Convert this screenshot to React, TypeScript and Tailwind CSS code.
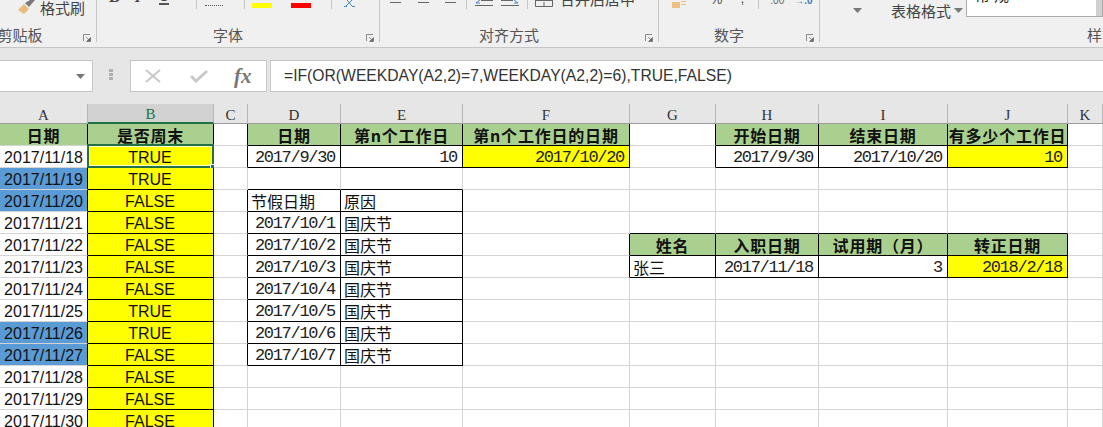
import React from "react";

const cols = ["A", "B", "C", "D", "E", "F", "G", "H", "I", "J", "K"];

type Cell = { t?: string; c?: "head" | "yellow" | "blue"; a?: "l" | "r" | "c"; f?: "arial" | "mono" | "cjk" };

const head = (t: string): Cell => ({ t, c: "head", a: "c", f: "cjk" });
const date = (t: string): Cell => ({ t, a: "r", f: "mono" });
const note = (t: string): Cell => ({ t, a: "l", f: "cjk" });

const weekdays: [string, string, boolean][] = [
  ["2017/11/18", "TRUE", false],
  ["2017/11/19", "TRUE", true],
  ["2017/11/20", "FALSE", true],
  ["2017/11/21", "FALSE", false],
  ["2017/11/22", "FALSE", false],
  ["2017/11/23", "FALSE", false],
  ["2017/11/24", "FALSE", false],
  ["2017/11/25", "TRUE", false],
  ["2017/11/26", "TRUE", true],
  ["2017/11/27", "FALSE", true],
  ["2017/11/28", "FALSE", false],
  ["2017/11/29", "FALSE", false],
  ["2017/11/30", "FALSE", false],
];

// sheet data, keyed by address
const data: Record<string, Cell> = {
  A1: head("日期"),
  B1: head("是否周末"),
  D1: head("日期"),
  E1: head("第n个工作日"),
  F1: head("第n个工作日的日期"),
  D2: date("2017/9/30"),
  E2: date("10"),
  F2: { t: "2017/10/20", c: "yellow", a: "r", f: "mono" },
  H1: head("开始日期"),
  I1: head("结束日期"),
  J1: head("有多少个工作日"),
  H2: date("2017/9/30"),
  I2: date("2017/10/20"),
  J2: { t: "10", c: "yellow", a: "r", f: "mono" },
  D4: note("节假日期"),
  E4: note("原因"),
  G6: head("姓名"),
  H6: head("入职日期"),
  I6: head("试用期（月）"),
  J6: head("转正日期"),
  G7: note("张三"),
  H7: date("2017/11/18"),
  I7: date("3"),
  J7: { t: "2018/2/18", c: "yellow", a: "r", f: "mono" },
};

weekdays.forEach(([d, v, blue], i) => {
  data[`A${i + 2}`] = { t: d, a: "r", f: "arial", c: blue ? "blue" : undefined };
  data[`B${i + 2}`] = { t: v, a: "c", f: "arial", c: "yellow" };
});

["10/1", "10/2", "10/3", "10/4", "10/5", "10/6", "10/7"].forEach((d, i) => {
  data[`D${i + 5}`] = date(`2017/${d}`);
  data[`E${i + 5}`] = note("国庆节");
});

const boxed = (col: number, row: number) => {
  const c = cols[col];
  if (c === "B") return true;
  if (["D", "E", "F", "H", "I", "J"].includes(c) && row <= 2) return true;
  if ((c === "D" || c === "E") && row >= 4 && row <= 11) return true;
  if (["G", "H", "I", "J"].includes(c) && (row === 6 || row === 7)) return true;
  return false;
};

const SheetCell = ({ col, row }: { col: number; row: number }) => {
  const cell = data[`${cols[col]}${row}`] ?? {};
  const right = boxed(col, row) || boxed(col + 1, row);
  const bottom = (boxed(col, row) || boxed(col, row + 1)) && cols[col] !== "A";
  return (
    <div
      className={`relative flex items-center overflow-visible whitespace-nowrap border-r border-b ${
        cell.f === "arial" ? "pl-[3px] pr-[4px]" : cell.f === "mono" ? "pl-[3px] pr-[5px]" : "px-[3px]"
      } ${right ? "border-r-black" : "border-r-[#d4d4d4]"} ${bottom ? "border-b-black" : "border-b-[#d4d4d4]"} ${
        cell.c === "head" ? "bg-[#a9d08e]" : cell.c === "yellow" ? "bg-[#ffff00]" : cell.c === "blue" ? "bg-[#5b9bd5]" : "bg-white"
      } ${cell.a === "r" ? "justify-end" : cell.a === "c" ? "justify-center" : "justify-start"} ${
        cell.f === "arial"
          ? "pt-[2px] font-['Liberation_Sans',sans-serif] text-[16px] text-[#111]"
          : cell.f === "mono"
            ? "pt-[2px] font-['Liberation_Mono',monospace] text-[17px] tracking-[-1.3px] text-[#222]"
            : "font-['Noto_Sans_CJK_SC',sans-serif] text-[16px] text-[#111]"
      } ${cell.c === "head" ? "font-bold tracking-[0.8px]" : ""}`}
    >
      {cell.t}
      {cols[col] === "B" && row === 2 && (
        <div className="absolute -left-px -top-[2px] -right-px -bottom-px border-2 border-[#217346]">
          <div className="h-full w-full border border-white/80" />
          <div className="absolute -right-[4px] -bottom-[4px] h-[6px] w-[6px] border border-white bg-[#217346]" />
        </div>
      )}
    </div>
  );
};

const Launcher = () => (
  <svg width="8" height="8" viewBox="0 0 8 8" className="mt-[6px] shrink-0">
    <path d="M.5 7V.5H7" fill="none" stroke="#8a8a8a" />
    <path d="M3 3l3.5 3.5M7.5 3.5v4h-4z" fill="#6a6a6a" stroke="#6a6a6a" strokeWidth=".7" />
  </svg>
);

const Sep = ({ className }: { className: string }) => <div className={`h-[9px] w-px shrink-0 bg-[#c6c6c6] ${className}`} />;

const Caret = ({ className }: { className: string }) => (
  <svg width="9" height="5" viewBox="0 0 9 5" className={`shrink-0 ${className}`}>
    <path d="M0 0h9L4.500 5z" fill="#777" />
  </svg>
);

const Group = ({ label, className, children }: { label?: string; className: string; children: React.ReactNode }) => (
  <div className={`flex h-[42px] shrink-0 flex-col border-r border-[#c6c6c6] ${className}`}>
    <div className="flex h-[27px] items-start overflow-hidden">{children}</div>
    <div className="flex h-[15px] items-center">
      <div className="flex-1 text-center font-['Noto_Sans_CJK_SC',sans-serif] text-[15px] leading-none text-[#555]">{label}</div>
      <div className="flex w-[20px] justify-end pr-[5px]">
        <Launcher />
      </div>
    </div>
  </div>
);

const AlignLine = ({ className }: { className: string }) => <div className={`mt-[2px] h-px w-[11px] shrink-0 bg-[#666] ${className}`} />;

const App: React.FC = () => {
  return (
    <div className="flex h-[427px] w-[1103px] flex-col overflow-hidden bg-white font-['Liberation_Sans','Noto_Sans_CJK_SC',sans-serif]">
      {/* ribbon, cut off at the top */}
      <div className="flex h-[48px] shrink-0 overflow-hidden border-b border-[#c6c6c6] bg-[#f0f0f0]">
        <Group label="剪贴板" className="-ml-[36px] w-[133px]">
          <svg width="20" height="16" viewBox="0 0 20 16" className="ml-[53px] shrink-0">
            <path d="M1 10l6-6 5 5-5 5z" fill="#e8bd7d" />
            <path d="M8 3l4 4 6-7h-5z" fill="#7a7a7a" />
          </svg>
          <span className="ml-[3px] font-['Noto_Sans_CJK_SC',sans-serif] text-[15px] leading-[15px] text-[#444]">格式刷</span>
        </Group>
        <Group label="字体" className="w-[283px]">
          <span className="ml-[12px] -mt-[11px] font-['Liberation_Serif',serif] text-[16px] font-bold leading-[16px] text-[#444]">B</span>
          <span className="ml-[15px] -mt-[11px] font-['Liberation_Serif',serif] text-[16px] font-bold italic leading-[16px] text-[#444]">I</span>
          <span className="ml-[18px] -mt-[11px] border-b-[2px] border-[#555] font-['Liberation_Sans',sans-serif] text-[14px] font-bold leading-[14px] text-[#444]">U</span>
          <Sep className="ml-[27px]" />
          <div className="ml-[8px] mt-[4px] h-[2px] w-[18px] shrink-0 border-b border-dotted border-[#555]" />
          <Sep className="ml-[21px]" />
          <div className="ml-[7px] mt-[3px] h-[5px] w-[20px] shrink-0 bg-[#ffff00]" />
          <div className="ml-[19px] mt-[3px] h-[5px] w-[20px] shrink-0 bg-[#ff0000]" />
          <Sep className="ml-[20px]" />
          <svg width="13" height="7" viewBox="0 0 13 7" className="ml-[11px] shrink-0">
            <path d="M4 0L9 6M9 0L3 6M1 6.500h3M9 6.500h3" fill="none" stroke="#4a86c5" />
          </svg>
        </Group>
        <Group label="对齐方式" className="w-[279px]">
          <AlignLine className="ml-[10px]" />
          <AlignLine className="ml-[17px]" />
          <AlignLine className="ml-[16px]" />
          <Sep className="ml-[10px]" />
          <svg width="18" height="7" viewBox="0 0 18 7" className="ml-[8px] shrink-0">
            <path d="M6 0.500h12M0 5.500h18" stroke="#666" fill="none" />
            <path d="M5 0L1 3h4" fill="none" stroke="#4a86c5" />
          </svg>
          <svg width="18" height="7" viewBox="0 0 18 7" className="ml-[8px] shrink-0">
            <path d="M0 .500h12M0 5.500h18" stroke="#666" fill="none" />
            <path d="M13 0l4 3h-4" fill="none" stroke="#4a86c5" />
          </svg>
          <Sep className="ml-[8px]" />
          <svg width="18" height="7" viewBox="0 0 18 7" className="ml-[7px] shrink-0">
            <path d="M.5 0v6.500h17V0M.5 .500h17M9 2v4.500" fill="none" stroke="#666" />
          </svg>
          <span className="ml-[7px] -mt-[9px] font-['Noto_Sans_CJK_SC',sans-serif] text-[15px] leading-[15px] text-[#444]">合并后居中</span>
        </Group>
        <Group label="数字" className="w-[161px]">
          <svg width="14" height="9" viewBox="0 0 14 9" className="ml-[13px] shrink-0">
            <path d="M0 2h8v6H0z" fill="#edbf83" />
            <path d="M9 1.500h5M9 4.500h5" stroke="#edbf83" fill="none" />
          </svg>
          <span className="ml-[24px] -mt-[8px] text-[14px] leading-[14px] text-[#555]">%</span>
          <span className="ml-[18px] -mt-[9px] text-[14px] leading-[14px] text-[#555]">,</span>
          <Sep className="ml-[14px]" />
          <span className="ml-[11px] -mt-[4px] text-[10px] leading-[10px] text-[#666]">.00</span>
          <span className="ml-[10px] -mt-[4px] text-[10px] font-bold leading-[10px] text-[#3f78b5]">→.0</span>
        </Group>
        <div className="flex min-w-0 flex-1 flex-col">
          <div className="flex h-[27px] items-start">
            <Caret className="ml-[33px] mt-[8px]" />
            <span className="ml-[29px] mt-[3px] font-['Noto_Sans_CJK_SC',sans-serif] text-[15px] leading-[15px] text-[#444]">表格格式</span>
            <Caret className="ml-[3px] mt-[8px]" />
            <div className="ml-[3px] flex h-[17px] flex-1 items-start justify-between overflow-hidden border border-t-0 border-[#ababab] bg-white">
              <span className="ml-[8px] -mt-[13px] font-['Noto_Sans_CJK_SC',sans-serif] text-[15px] leading-[15px] tracking-[4px] text-[#222]">常规</span>
              <div className="h-full w-[6px] bg-[#d0d0d0]" />
            </div>
          </div>
          <div className="ml-[267px] whitespace-nowrap font-['Noto_Sans_CJK_SC',sans-serif] text-[15px] leading-[15px] text-[#555]">样式</div>
        </div>
      </div>

      {/* formula bar */}
      <div className="flex h-[56px] shrink-0 items-start bg-[#e6e6e6] pt-[12px]">
        <div className="flex h-[32px] w-[93px] shrink-0 items-center justify-end border border-l-0 border-[#c6c6c6] bg-white pr-[7px]">
          <Caret className="" />
        </div>
        <div className="ml-[16px] mt-[9px] flex w-[4px] shrink-0 flex-col gap-[1px]">
          <div className="h-[3px] bg-[#b0b0b0]" />
          <div className="h-[3px] bg-[#b0b0b0]" />
          <div className="h-[3px] bg-[#b0b0b0]" />
        </div>
        <div className="ml-[17px] flex h-[32px] w-[137px] shrink-0 items-center border border-[#c6c6c6] bg-white">
          <svg width="16" height="14" viewBox="0 0 16 14" className="ml-[14px] shrink-0">
            <path d="M1 1l14 12M15 1L1 13" fill="none" stroke="#c8c8c8" strokeWidth="2" />
          </svg>
          <svg width="18" height="14" viewBox="0 0 18 14" className="ml-[29px] shrink-0">
            <path d="M1 7l5 5L17 2" fill="none" stroke="#c8c8c8" strokeWidth="3" />
          </svg>
          <span className="ml-[26px] font-['Liberation_Serif',serif] text-[21px] font-bold italic leading-none text-[#777]">fx</span>
        </div>
        <div className="ml-[3px] flex h-[32px] min-w-0 flex-1 items-center border-y border-l border-[#c6c6c6] bg-white pl-[13px] font-['Liberation_Sans',sans-serif] text-[15.7px] whitespace-nowrap text-[#333]">
          =IF(OR(WEEKDAY(A2,2)=7,WEEKDAY(A2,2)=6),TRUE,FALSE)
        </div>
      </div>

      {/* sheet */}
      <div className="grid grid-cols-[88px_126px_34px_93px_122px_167px_86px_103px_129px_120px_1fr] grid-rows-[20px_repeat(14,22px)]">
        {cols.map((c) => (
          <div
            key={c}
            className={`flex items-center justify-center border-r pt-[3px] font-['Liberation_Serif',serif] text-[15px] ${
              c === "B"
                ? "border-b-2 border-r-[#b5b5b5] border-b-[#217346] bg-[#d2d2d2] text-[#217346]"
                : "border-b border-r-[#b5b5b5] border-b-[#9b9b9b] bg-[#e6e6e6] text-[#333]"
            }`}
          >
            {c}
          </div>
        ))}
        {Array.from({ length: 14 }, (_, r) =>
          cols.map((c, i) => <SheetCell key={`${c}${r + 1}`} col={i} row={r + 1} />)
        )}
      </div>
    </div>
  );
};

export default App;
